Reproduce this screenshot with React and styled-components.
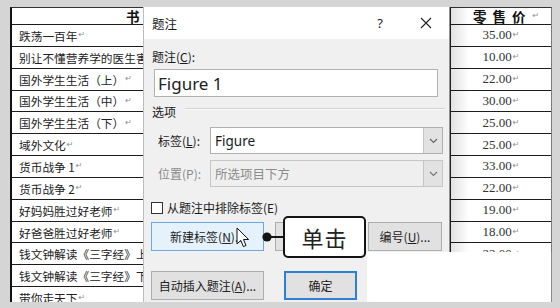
import React from 'react';
import styled, { createGlobalStyle } from 'styled-components';

const Global = createGlobalStyle`
  html, body { margin: 0; padding: 0; background: #d5d5d5; }
  body { width: 560px; height: 308px; overflow: hidden; }
`;

const Stage = styled.div`
  position: relative;
  width: 560px;
  height: 308px;
  box-sizing: border-box;
  padding: 7px 8px 6px 10px;
  background: #d5d5d5;
  overflow: hidden;
  font-family: "Noto Sans CJK SC", sans-serif;
`;

const Sheet = styled.div`
  height: 295px;
  box-sizing: border-box;
  background: #fff;
  overflow: hidden;
  border-top: 1px solid #333;
  border-left: 2px solid #111;
  border-right: 1px solid #7a7a7a;
  display: grid;
  grid-template-columns: 1fr 101px;
  grid-template-rows: 17px;
  grid-auto-rows: 21.85px;
`;

const Cell = styled.div`
  box-sizing: border-box;
  border-bottom: 1.5px solid #1c1c1c;
  display: flex;
  align-items: center;
  white-space: nowrap;
  overflow: hidden;
  color: #222;
  ${(p) => (p.$price ? 'border-left: 1px solid #222; justify-content: center;' : 'padding-left: 7px;')}
`;

const HeadText = styled.span`
  font-weight: 700;
  font-size: 13.5px;
  line-height: 15px;
  letter-spacing: ${(p) => p.$spacing || '0px'};
  padding-left: ${(p) => p.$indent || '0px'};
  color: #111;
`;

const NameText = styled.span`
  font-size: 11.7px;
  font-family: "Noto Sans CJK SC", sans-serif;
`;

const PriceText = styled.span`
  font-size: 13px;
  font-family: "Liberation Serif", "Noto Sans CJK SC", serif;
  color: #333;
`;

const Mark = styled.span`
  font-size: 8px;
  line-height: 10px;
  color: #8c8c8c;
  margin-left: 1px;
  font-family: "DejaVu Sans", sans-serif;
`;

const Dialog = styled.div`
  position: absolute;
  left: 143px;
  top: 7px;
  width: 307px;
  height: 295px;
  box-sizing: border-box;
  background: #f0f0f0;
  border-left: 1px solid #bdbdbd;
  border-right: 1px solid #a8a8a8;
  display: flex;
  flex-direction: column;
  font-family: "Noto Sans CJK SC", sans-serif;
  font-size: 12px;
  color: #1a1a1a;
  &::after {
    content: "";
    position: absolute;
    left: 100%;
    top: 0;
    width: 20px;
    height: 100%;
    background: linear-gradient(to right, rgba(0, 0, 0, 0.13), rgba(0, 0, 0, 0));
    pointer-events: none;
  }
`;

const TitleBar = styled.div`
  height: 32px;
  flex: none;
  background: #fff;
  display: flex;
  align-items: center;
  padding-left: 8px;
`;

const Title = styled.span`
  font-size: 12.5px;
  flex: 1;
`;

const TitleButton = styled.div`
  width: 46px;
  height: 32px;
  display: flex;
  align-items: center;
  justify-content: center;
  font-size: 13px;
  font-family: "Noto Sans", sans-serif;
  color: #222;
`;

const FieldLabel = styled.div`
  margin: ${(p) => p.$m || '0'};
  line-height: 16px;
  color: ${(p) => (p.$disabled ? '#8a8a8a' : '#1a1a1a')};
  width: ${(p) => p.$w || 'auto'};
  flex: none;
`;

const U = styled.span`
  text-decoration: underline;
  text-underline-offset: 1px;
`;

const TextInput = styled.div`
  margin: 4px 0 0 10px;
  width: 284px;
  height: 28px;
  box-sizing: border-box;
  background: #fff;
  border: 1px solid #b2b2b2;
  display: flex;
  align-items: center;
  padding-left: 3px;
  font-family: "Noto Sans", sans-serif;
  font-size: 17px;
  color: #222;
`;

const Section = styled.div`
  margin: 7px 4px 0 8px;
  display: flex;
  align-items: flex-start;
  height: 16px;
`;

const SectionLine = styled.div`
  flex: 1;
  margin: 4px 0 0 9px;
  height: 1px;
  background: #d2d2d2;
  box-shadow: 0 1px 0 #fbfbfb;
`;

const FieldRow = styled.div`
  margin: ${(p) => p.$m || '0'};
  display: flex;
  align-items: center;
  padding-left: 14px;
`;

const Select = styled.div`
  width: 233px;
  height: 27px;
  box-sizing: border-box;
  border: 1px solid ${(p) => (p.$disabled ? '#c6c6c6' : '#b0b0b0')};
  background: ${(p) => (p.$disabled ? '#efefef' : '#fff')};
  display: flex;
  align-items: stretch;
`;

const SelectValue = styled.div`
  flex: 1;
  display: flex;
  align-items: center;
  padding-left: 4px;
  font-size: ${(p) => (p.$latin ? '13.5px' : '12.5px')};
  font-family: ${(p) => (p.$latin ? '"Noto Sans", sans-serif' : '"Noto Sans CJK SC", sans-serif')};
  color: ${(p) => (p.$disabled ? '#8c8c8c' : '#1a1a1a')};
`;

const DropButton = styled.div`
  width: 18px;
  border-left: 1px solid #c4c4c4;
  background: #e2e2e2;
  display: flex;
  align-items: center;
  justify-content: center;
`;

const CheckRow = styled.div`
  margin: 13px 0 0 7px;
  height: 16px;
  display: flex;
  align-items: center;
  gap: 4px;
`;

const CheckBox = styled.div`
  width: 12px;
  height: 12px;
  box-sizing: border-box;
  border: 1px solid #333;
  background: #fff;
`;

const ButtonRow = styled.div`
  margin: ${(p) => p.$m || '0'};
  padding-left: 7px;
  display: flex;
  gap: ${(p) => p.$gap || '10px'};
`;

const Button = styled.div`
  width: ${(p) => p.$w}px;
  height: 29px;
  box-sizing: border-box;
  flex: none;
  display: flex;
  align-items: center;
  justify-content: center;
  font-size: 12px;
  color: #222;
  background: ${(p) => (p.$hover ? '#e5f1fb' : '#e1e1e1')};
  border: ${(p) =>
    p.$default ? '2px solid #2f7fd6' : p.$hover ? '1px solid #6aa8e2' : '1px solid #adadad'};
  ${(p) => (p.$margin ? `margin-left: ${p.$margin}px;` : '')}
`;

const Cutout = styled.div`
  position: absolute;
  left: 367px;
  top: 252px;
  width: 185px;
  height: 50px;
  box-sizing: border-box;
  background: #fff;
  border-right: 1px solid #8a8a8a;
`;

const Callout = styled.div`
  position: absolute;
  left: 283px;
  top: 216px;
  width: 83px;
  height: 42px;
  box-sizing: border-box;
  background: #fff;
  border: 2.5px solid #141414;
  border-radius: 5px;
  display: flex;
  align-items: center;
  justify-content: center;
  font-size: 22px;
  color: #222;
  letter-spacing: 1px;
`;

const Connector = styled.svg`
  position: absolute;
  left: 261px;
  top: 231px;
`;

const Cursor = styled.svg`
  position: absolute;
  left: 236px;
  top: 227px;
`;

const rows = [
  ['跌荡一百年', '35.00'],
  ['别让不懂营养学的医生害了你', '10.00'],
  ['国外学生生活（上）', '22.00'],
  ['国外学生生活（中）', '30.00'],
  ['国外学生生活（下）', '25.00'],
  ['域外文化', '25.00'],
  ['货币战争 1', '33.00'],
  ['货币战争 2', '22.00'],
  ['好妈妈胜过好老师', '19.00'],
  ['好爸爸胜过好老师', '18.00'],
  ['钱文钟解读《三字经》上', '22.00'],
  ['钱文钟解读《三字经》下', '22.00'],
  ['带你走天下', '28.00'],
];

const Chevron = ({ color = '#666' }) => (
  <svg width="9" height="6" viewBox="0 0 9 6">
    <polyline points="1,1 4.5,4.5 8,1" fill="none" stroke={color} strokeWidth="1.2" />
  </svg>
);

export default function App() {
  return (
    <Stage>
      <Global />
      <Sheet>
        <Cell>
          <HeadText $indent="107px" $spacing="6px">书 名</HeadText>
        </Cell>
        <Cell $price>
          <HeadText $indent="10px" $spacing="6px">零售价</HeadText>
          <Mark>↵</Mark>
        </Cell>
        {rows.map(([name, price]) => (
          <React.Fragment key={name}>
            <Cell>
              <NameText>{name}</NameText>
              <Mark>↵</Mark>
            </Cell>
            <Cell $price>
              <PriceText>{price}</PriceText>
              <Mark>↵</Mark>
            </Cell>
          </React.Fragment>
        ))}
      </Sheet>

      <Dialog>
        <TitleBar>
          <Title>题注</Title>
          <TitleButton>?</TitleButton>
          <TitleButton>
            <svg width="12" height="12" viewBox="0 0 12 12">
              <path d="M1 1 L11 11 M11 1 L1 11" stroke="#222" strokeWidth="1.1" />
            </svg>
          </TitleButton>
        </TitleBar>

        <FieldLabel $m="10px 0 0 8px">
          题注(<U>C</U>):
        </FieldLabel>
        <TextInput>Figure 1</TextInput>

        <Section>
          <FieldLabel>选项</FieldLabel>
          <SectionLine />
        </Section>

        <FieldRow $m="7px 0 0 0">
          <FieldLabel $w="52px">
            标签(<U>L</U>):
          </FieldLabel>
          <Select>
            <SelectValue $latin>Figure</SelectValue>
            <DropButton>
              <Chevron />
            </DropButton>
          </Select>
        </FieldRow>

        <FieldRow $m="6px 0 0 0">
          <FieldLabel $w="52px" $disabled>
            位置(P):
          </FieldLabel>
          <Select $disabled>
            <SelectValue $disabled>所选项目下方</SelectValue>
            <DropButton>
              <Chevron color="#777" />
            </DropButton>
          </Select>
        </FieldRow>

        <CheckRow>
          <CheckBox />
          <FieldLabel>从题注中排除标签(E)</FieldLabel>
        </CheckRow>

        <ButtonRow $m="6px 0 0 0">
          <Button $w={113} $hover>
            新建标签(<U>N</U>)...
          </Button>
          <Button $w={83} $margin={1}>
            删除标签(<U>D</U>)
          </Button>
          <Button $w={74}>
            编号(<U>U</U>)...
          </Button>
        </ButtonRow>

        <ButtonRow $m="20px 0 0 0" $gap="20px">
          <Button $w={113}>
            自动插入题注(<U>A</U>)...
          </Button>
          <Button $w={73} $default>
            确定
          </Button>
          <Button $w={74}>取消</Button>
        </ButtonRow>
      </Dialog>

      <Cutout />

      <Cursor width="14" height="22" viewBox="0 0 14 22">
        <path
          d="M1 1 L1 17 L4.8 13.4 L7.4 19.6 L10 18.5 L7.5 12.5 L12.6 12.5 Z"
          fill="#fff"
          stroke="#111"
          strokeWidth="1"
          strokeLinejoin="round"
        />
      </Cursor>

      <Connector width="24" height="12" viewBox="0 0 24 12">
        <line x1="6" y1="6" x2="23" y2="6" stroke="#141414" strokeWidth="2" />
        <circle cx="6" cy="6" r="4.6" fill="#141414" />
      </Connector>

      <Callout>单击</Callout>
    </Stage>
  );
}
